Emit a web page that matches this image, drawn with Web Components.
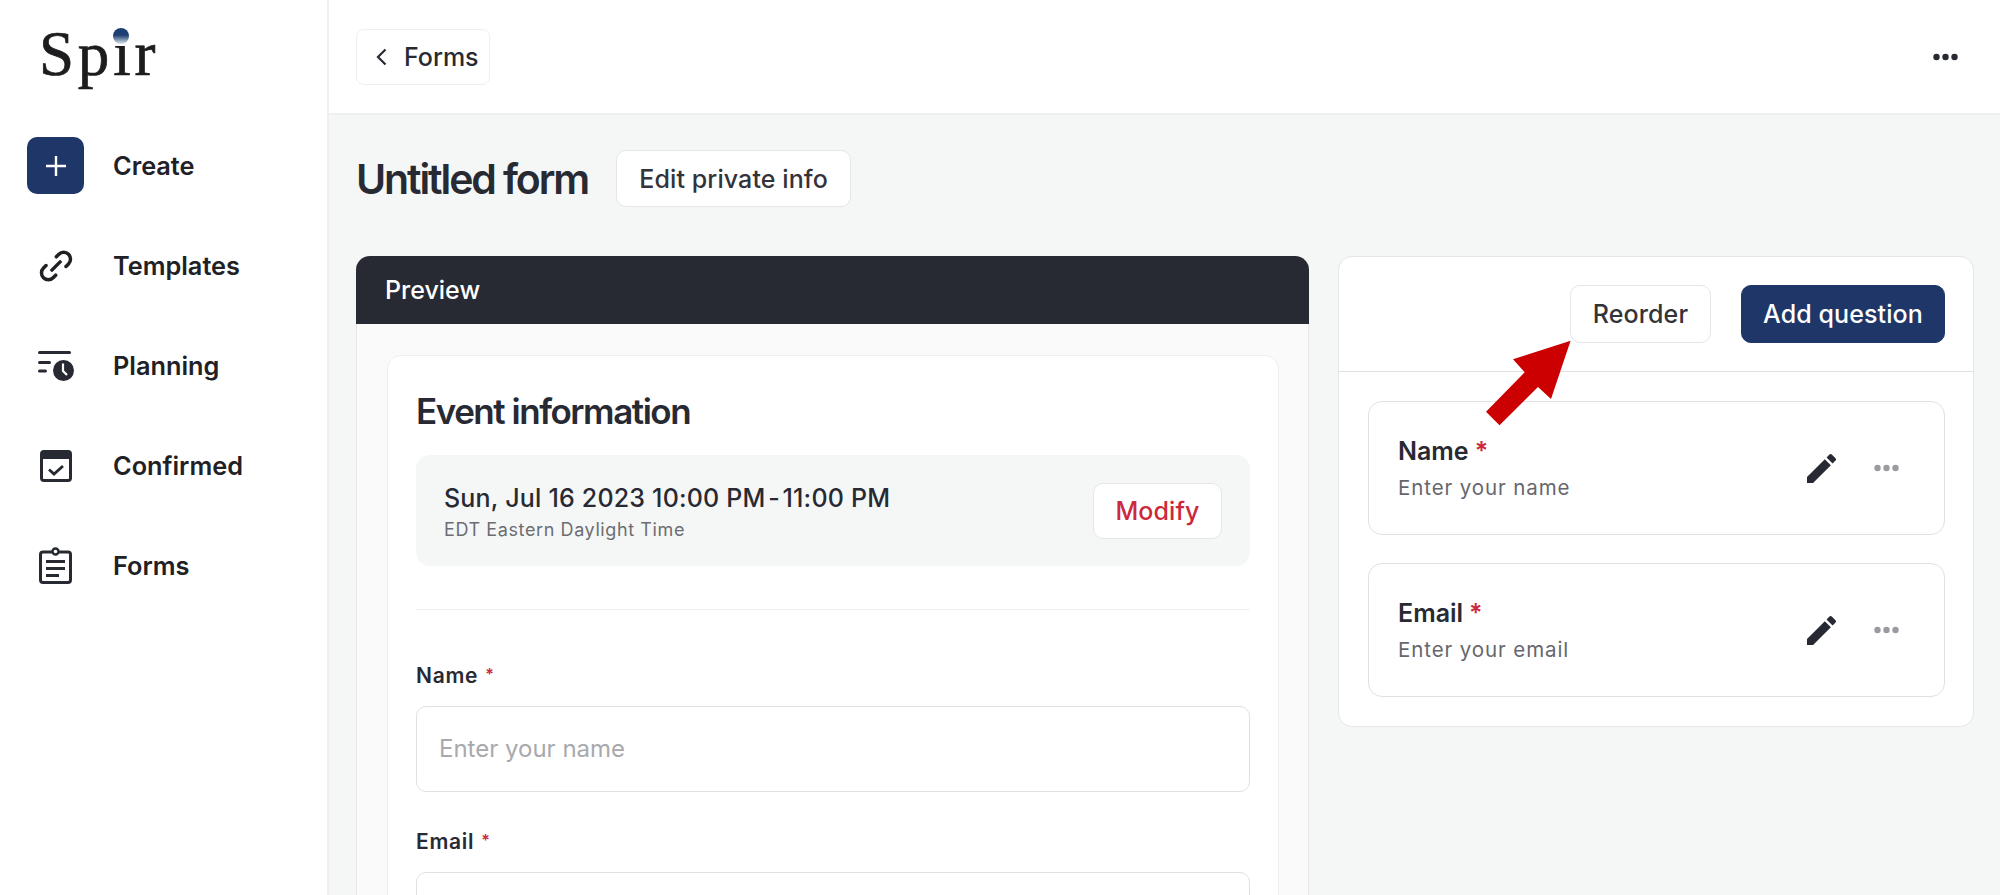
<!DOCTYPE html>
<html lang="en">
<head>
<meta charset="utf-8">
<title>Untitled form</title>
<style>
  html, body { margin: 0; height: 100%; overflow: hidden; }
  body { font-family: Inter, "Liberation Sans", sans-serif; color: #282a33; background: #f5f7f6; }
</style>
</head>
<body>
<app-shell>
  <side-nav slot="nav">
    <nav-item label="Create" primary>
      <svg slot="icon" width="24" height="24" viewBox="0 0 24 24"><path d="M12 2v20M2 12h20" stroke="#fff" stroke-width="2.4" fill="none"/></svg>
    </nav-item>
    <nav-item label="Templates">
      <svg slot="icon" width="38" height="38" viewBox="0 0 24 24" fill="none" stroke="#1f2125" stroke-width="2.200" stroke-linecap="round"><path d="M9.400 14.600l5.200-5.200M12.200 6.200l1.600-1.600a4.300 4.300 0 0 1 6.100 6.100l-1.600 1.600M11.800 17.800l-1.600 1.600a4.300 4.300 0 0 1-6.100-6.100l1.600-1.600"/></svg>
    </nav-item>
    <nav-item label="Planning">
      <svg slot="icon" width="36" height="30" viewBox="0 0 36 30"><g fill="#282a33"><rect x="0" y="0" width="33" height="3" rx="1.500"/><rect x="0" y="10" width="13" height="3" rx="1.500"/><rect x="0" y="18.500" width="9" height="3" rx="1.500"/><circle cx="25.500" cy="19.500" r="10.500"/></g><path d="M25 12.500v7.500l4 4" fill="none" stroke="#fff" stroke-width="2.200"/></svg>
    </nav-item>
    <nav-item label="Confirmed">
      <svg slot="icon" width="32" height="32" viewBox="0 0 32 32"><rect x="1.500" y="1.500" width="29" height="29" rx="2.500" fill="#fff" stroke="#282a33" stroke-width="3"/><rect x="1" y="1" width="30" height="8" rx="2" fill="#282a33"/><path d="M9 19.500l5 4.500 9-8" fill="none" stroke="#282a33" stroke-width="2.800"/></svg>
    </nav-item>
    <nav-item label="Forms">
      <svg slot="icon" width="33" height="37" viewBox="0 0 33 37"><rect x="1.500" y="5" width="30" height="30.500" rx="2.500" fill="#fff" stroke="#282a33" stroke-width="3"/><circle cx="16.500" cy="4.500" r="3" fill="#fff" stroke="#282a33" stroke-width="2.400"/><path d="M7 14.500h19M7 21.500h19M7 28.500h13" stroke="#282a33" stroke-width="3"/></svg>
    </nav-item>
  </side-nav>

  <top-bar slot="top" back="Forms"></top-bar>

  <title-row slot="title" heading="Untitled form">
    <ui-button style="--w:235px;--h:57px">Edit private info</ui-button>
  </title-row>

  <preview-panel slot="left">
    <event-info date="Sun, Jul 16 2023 10:00 PM" end="11:00 PM" zone="EDT Eastern Daylight Time"></event-info>
    <form-field label="Name" placeholder="Enter your name"></form-field>
    <form-field label="Email"></form-field>
  </preview-panel>

  <question-panel slot="right">
    <question-card label="Name" hint="Enter your name"></question-card>
    <question-card label="Email" hint="Enter your email"></question-card>
  </question-panel>
</app-shell>

<script>
const dotsIcon = (color, w) => `
  <svg width="${w}" height="8" viewBox="0 0 25 8" fill="${color}">
    <circle cx="3.500" cy="4" r="3.200"/><circle cx="12.500" cy="4" r="3.200"/><circle cx="21.500" cy="4" r="3.200"/>
  </svg>`

class AppShell extends HTMLElement {
  constructor() {
    super()
    this.attachShadow({ mode: 'open' })
    this.shadowRoot.innerHTML = `
      <style>
        :host { display: grid; grid-template-columns: 329px 1fr; height: 895px; overflow: hidden; }
        main { display: flex; flex-direction: column; min-width: 0; }
        .content { padding: 35px 26px 0 27px; display: flex; flex-direction: column; gap: 49px; }
        .cols { display: grid; grid-template-columns: 953px 636px; gap: 29px; align-items: start; }
      </style>
      <slot name="nav"></slot>
      <main>
        <slot name="top"></slot>
        <div class="content">
          <slot name="title"></slot>
          <div class="cols">
            <slot name="left"></slot>
            <slot name="right"></slot>
          </div>
        </div>
      </main>
    `
  }
}

class SideNav extends HTMLElement {
  constructor() {
    super()
    this.attachShadow({ mode: 'open' })
    this.shadowRoot.innerHTML = `
      <style>
        :host { display: block; background: #fff; border-right: 2px solid #eeefef; padding-top: 137px; position: relative; }
        .logo { position: absolute; left: 39px; top: 16px; font: 400 63px/76px "Liberation Serif", serif; letter-spacing: 3.800px;
                -webkit-text-stroke: .7px #1d1d1f; color: #1d1d1f; }
        .dot { position: absolute; left: 113px; top: 28px; width: 16px; height: 16px; border-radius: 50%;
               background: linear-gradient(#1e3f74 45%, #dfe6ec); }
        .cover { position: absolute; left: 105px; top: 26px; width: 30px; height: 20px; background: #fff; }
        nav { display: flex; flex-direction: column; gap: 43px; }
      </style>
      <div class="logo">Spir</div>
      <div class="cover"></div>
      <div class="dot"></div>
      <nav><slot></slot></nav>
    `
  }
}

class NavItem extends HTMLElement {
  constructor() {
    super()
    this.attachShadow({ mode: 'open' })
    this.shadowRoot.innerHTML = `
      <style>
        :host { display: flex; align-items: center; height: 57px; padding-left: 27px; gap: 29px;
                font: 600 25.300px/30px Inter, "Liberation Sans", sans-serif; color: #1f2125; }
        .icon { width: 57px; height: 57px; border-radius: 10px; display: flex; align-items: center; justify-content: center; }
        :host([primary]) .icon { background: #1e3668; }
      </style>
      <span class="icon"><slot name="icon"></slot></span>
      <span>${this.getAttribute('label')}</span>
    `
  }
}

class TopBar extends HTMLElement {
  constructor() {
    super()
    this.attachShadow({ mode: 'open' })
    this.shadowRoot.innerHTML = `
      <style>
        :host { display: flex; align-items: center; justify-content: space-between; box-sizing: border-box; height: 115px;
                padding: 1px 42px 0 27px; background: #fff; border-bottom: 2px solid #eeefef; }
        .back { display: flex; align-items: center; box-sizing: border-box; width: 134px; height: 56px; padding-left: 19px; gap: 17px;
                border: 1.500px solid #efefef; border-radius: 8px; font: 500 25px/30px Inter, "Liberation Sans", sans-serif; color: #282a33; }
      </style>
      <div class="back">
        <svg width="11" height="18" viewBox="0 0 11 18"><path d="M9.500 1.500L2 9l7.500 7.500" fill="none" stroke="#282a33" stroke-width="2.200"/></svg>
        <span>${this.getAttribute('back')}</span>
      </div>
      ${dotsIcon('#282a33', 25)}
    `
  }
}

class TitleRow extends HTMLElement {
  constructor() {
    super()
    this.attachShadow({ mode: 'open' })
    this.shadowRoot.innerHTML = `
      <style>
        :host { display: flex; align-items: center; gap: 28px; height: 57px; }
        h1 { margin: 0; font: 600 41px/50px Inter, "Liberation Sans", sans-serif; letter-spacing: -2.100px; color: #282a33; }
      </style>
      <h1>${this.getAttribute('heading')}</h1>
      <slot></slot>
    `
  }
}

class UiButton extends HTMLElement {
  constructor() {
    super()
    this.attachShadow({ mode: 'open' })
    this.shadowRoot.innerHTML = `
      <style>
        :host { display: inline-flex; align-items: center; justify-content: center; box-sizing: border-box;
                width: var(--w, auto); height: var(--h, 57px); border-radius: 10px; background: #fff;
                border: 1.500px solid #e6e6e6; color: #33343a; font: 500 25px/30px Inter, "Liberation Sans", sans-serif; letter-spacing: .1px; }
        :host([primary]) { background: #1e3668; border-color: #1e3668; color: #fff; }
        :host([danger]) { color: #cc2a3c; }
      </style>
      <slot></slot>
    `
  }
}

class PreviewPanel extends HTMLElement {
  constructor() {
    super()
    this.attachShadow({ mode: 'open' })
    this.shadowRoot.innerHTML = `
      <style>
        :host { display: block; }
        .head { height: 68px; box-sizing: border-box; padding-left: 29px; display: flex; align-items: center; background: #282a33;
                color: #fff; border-radius: 14px 14px 0 0; font: 500 25px/30px Inter, "Liberation Sans", sans-serif; }
        .body { background: #fafafa; border: 1px solid #e6e6e6; border-top: 0; padding: 31px 29px 0 30px; height: 600px; }
        .card { background: #fff; border: 1px solid #efefef; border-radius: 14px; padding: 30px 28px 29px 28px; height: 700px; }
        .fields { display: flex; flex-direction: column; gap: 35px; }
      </style>
      <div class="head">Preview</div>
      <div class="body">
        <div class="card">
          <div class="fields"><slot></slot></div>
        </div>
      </div>
    `
  }
}

class EventInfo extends HTMLElement {
  constructor() {
    super()
    this.attachShadow({ mode: 'open' })
    this.shadowRoot.innerHTML = `
      <style>
        :host { display: block; padding-bottom: 43px; margin-bottom: 16px; border-bottom: 1.500px solid #efefef; }
        h2 { margin: 0 0 19px; font: 600 35px/50px Inter, "Liberation Sans", sans-serif; letter-spacing: -1.470px; color: #282a33; }
        .box { display: flex; align-items: center; justify-content: space-between; box-sizing: border-box; height: 111px;
               padding: 0 28px 0 28px; border-radius: 14px; background: #f5f7f6; }
        .date { font: 500 25px/32px Inter, "Liberation Sans", sans-serif; color: #282a33; letter-spacing: .2px; padding-top: 2px; }
        .dash { letter-spacing: -4px; margin-right: 4px; }
        .zone { font: 400 18px/24px Inter, "Liberation Sans", sans-serif; letter-spacing: .6px; color: #6c6d73; margin-top: 4px; }
      </style>
      <h2>Event information</h2>
      <div class="box">
        <div>
          <div class="date">${this.getAttribute('date')}<span class="dash"> - </span>${this.getAttribute('end')}</div>
          <div class="zone">${this.getAttribute('zone')}</div>
        </div>
        <ui-button danger style="--w:129px;--h:56px">Modify</ui-button>
      </div>
    `
  }
}

class FormField extends HTMLElement {
  constructor() {
    super()
    this.attachShadow({ mode: 'open' })
    const ph = this.getAttribute('placeholder') || ''
    this.shadowRoot.innerHTML = `
      <style>
        :host { display: block; }
        label { display: block; font: 600 21px/26px Inter, "Liberation Sans", sans-serif; letter-spacing: .7px; color: #282a33; margin-bottom: 17px; }
        i { font-style: normal; color: #cc2a3c; font-size: 16px; margin-left: 7px; vertical-align: 3px; }
        .input { box-sizing: border-box; height: 86px; display: flex; align-items: center; padding-left: 22px; background: #fff;
                 border: 1.500px solid #e1e1e1; border-radius: 10px; font: 400 24px/30px Inter, "Liberation Sans", sans-serif; color: #a8a9ad; }
      </style>
      <label>${this.getAttribute('label')}<i>*</i></label>
      <div class="input">${ph}</div>
    `
  }
}

class QuestionPanel extends HTMLElement {
  constructor() {
    super()
    this.attachShadow({ mode: 'open' })
    this.shadowRoot.innerHTML = `
      <style>
        :host { display: block; background: #fff; border: 1.500px solid #e6e6e6; border-radius: 14px; box-sizing: border-box; height: 471px; }
        .actions { display: flex; justify-content: flex-end; gap: 30px; height: 115px; box-sizing: border-box; padding: 28px 28px 0 0; border-bottom: 1.500px solid #e1e1e1; }
        .list { display: flex; flex-direction: column; gap: 28px; padding: 29px 28px 0 29px; }
      </style>
      <div class="actions">
        <ui-button style="--w:141px;--h:58px">Reorder</ui-button>
        <ui-button primary style="--w:204px;--h:58px">Add question</ui-button>
      </div>
      <div class="list"><slot></slot></div>
    `
  }
}

class QuestionCard extends HTMLElement {
  constructor() {
    super()
    this.attachShadow({ mode: 'open' })
    this.shadowRoot.innerHTML = `
      <style>
        :host { display: flex; align-items: center; justify-content: space-between; box-sizing: border-box; height: 134px;
                padding: 0 45px 0 29px; border: 1.500px solid #e1e1e1; border-radius: 14px; background: #fff; }
        .text { padding-top: 1px; }
        .name { font: 600 25px/30px Inter, "Liberation Sans", sans-serif; color: #282a33; }
        i { font-style: normal; color: #cc2a3c; margin-left: 6px; }
        .hint { font: 400 20.500px/28px Inter, "Liberation Sans", sans-serif; letter-spacing: .9px; color: #66676d; margin-top: 8px; }
        .tools { display: flex; align-items: center; gap: 38px; }
      </style>
      <div class="text">
        <div class="name">${this.getAttribute('label')}<i>*</i></div>
        <div class="hint">${this.getAttribute('hint')}</div>
      </div>
      <div class="tools">
        <svg width="29" height="29" viewBox="3 3 18 18" fill="#282a33"><path d="M3 17.250V21h3.750L17.810 9.940l-3.750-3.750L3 17.250zM20.710 7.040c.39-.39.39-1.020 0-1.410l-2.340-2.340c-.39-.39-1.020-.39-1.410 0l-1.830 1.830 3.750 3.750 1.830-1.830z"/></svg>
        ${dotsIcon('#9a9ba0', 25)}
      </div>
    `
  }
}

class ArrowMark extends HTMLElement {
  constructor() {
    super()
    this.attachShadow({ mode: 'open' })
    this.shadowRoot.innerHTML = `
      <style>
        :host { position: fixed; left: 1486px; top: 340px; width: 86px; height: 86px; pointer-events: none; }
        svg { display: block; }
      </style>
      <svg width="86" height="86" viewBox="1486 340 86 86">
        <polygon fill="#cc0000" points="1570.600,340.700 1513,359.300 1524.700,372.300 1486,411.700 1499.500,425.300 1538,387 1551,399"/>
      </svg>
    `
  }
}

customElements.define('app-shell', AppShell)
customElements.define('side-nav', SideNav)
customElements.define('nav-item', NavItem)
customElements.define('top-bar', TopBar)
customElements.define('title-row', TitleRow)
customElements.define('ui-button', UiButton)
customElements.define('preview-panel', PreviewPanel)
customElements.define('event-info', EventInfo)
customElements.define('form-field', FormField)
customElements.define('question-panel', QuestionPanel)
customElements.define('question-card', QuestionCard)
customElements.define('arrow-mark', ArrowMark)
document.body.appendChild(document.createElement('arrow-mark'))
</script>
</body>
</html>
